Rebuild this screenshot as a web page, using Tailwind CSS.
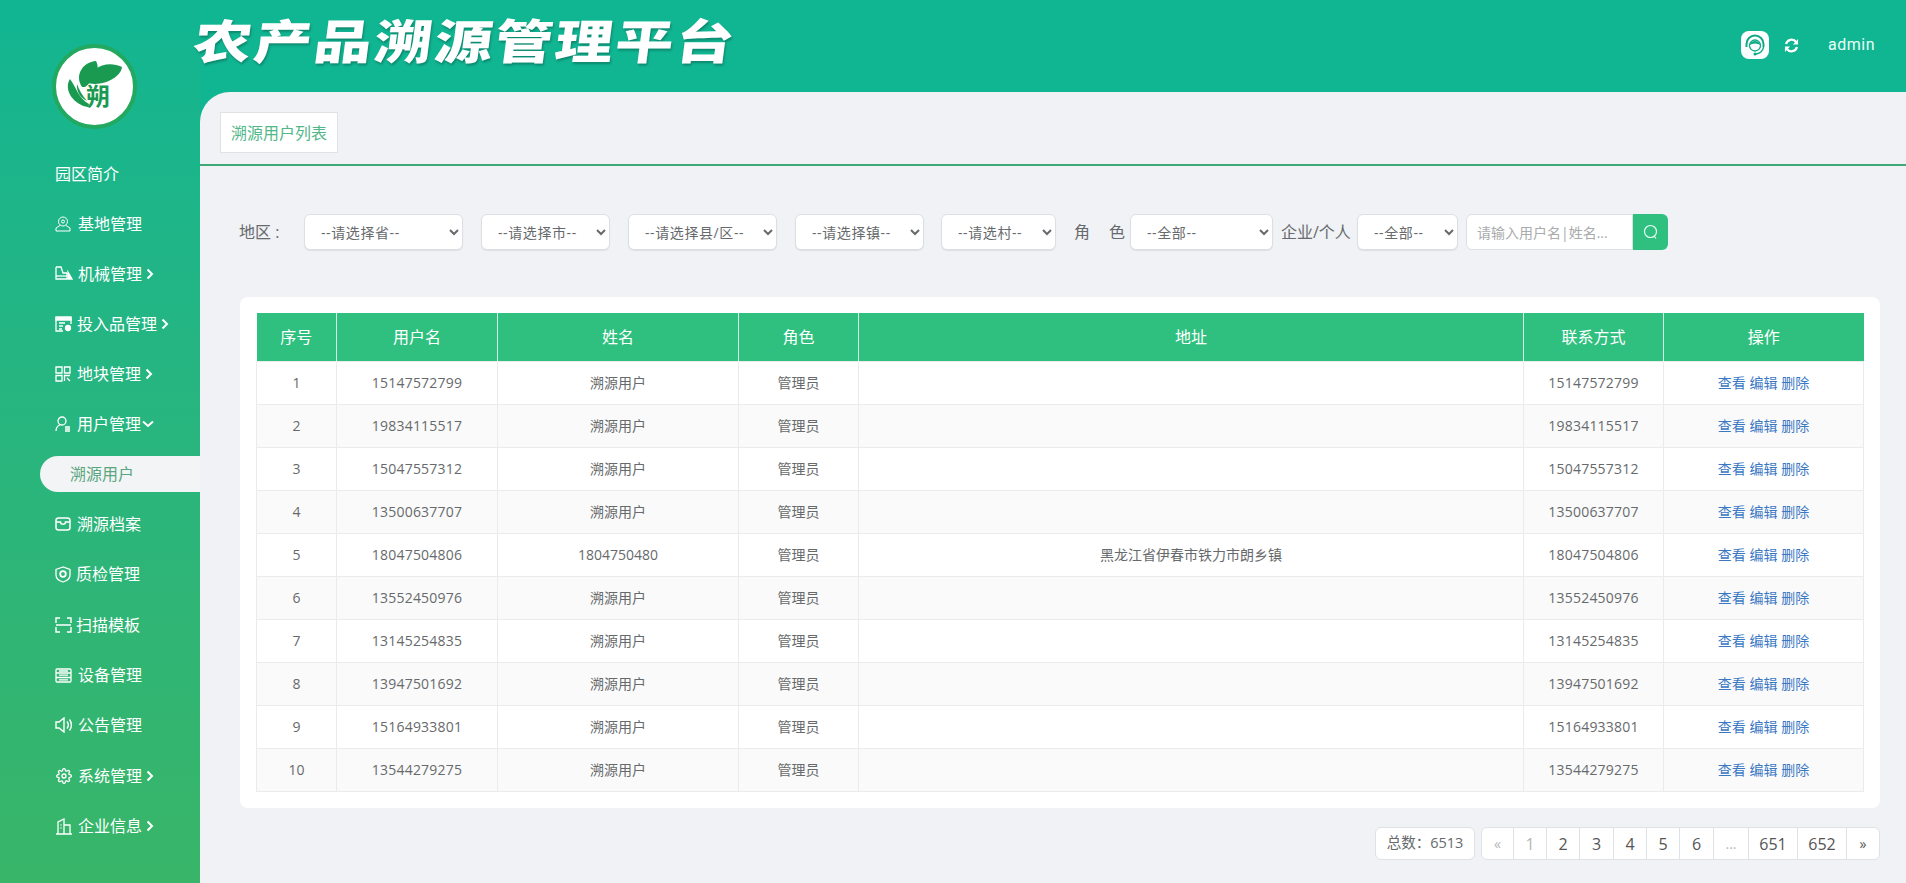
<!DOCTYPE html>
<html lang="zh-CN">
<head>
    <meta charset="UTF-8">
    <meta name="viewport" content="width=device-width, initial-scale=1.0">
    <title>农产品溯源管理平台</title>
    <script src="https://cdn.jsdelivr.net/npm/@tailwindcss/browser@4"></script>
</head>
<body class="h-[883px] overflow-hidden flex bg-[#10b592] text-[#676a6c] font-['Open_Sans','Noto_Sans_CJK_SC',sans-serif]">

    <!-- Sidebar -->
    <aside class="w-[200px] h-full shrink-0 bg-gradient-to-b from-[#10b592] to-[#38b568] text-white text-base">
        <div class="h-[149px] pt-[44px] pl-[52px]">
            <div class="relative w-[85px] h-[85px] rounded-full bg-white border-[4px] border-[#22a85f]">
                <svg class="absolute left-[7px] top-[6px] w-[64px] h-[64px]" viewBox="0 0 64 64" fill="#1a9a50">
                    <path d="M19 33C11 21 20 8 33 7 38 16 31 26 22 33Z"/>
                    <path d="M25 29C27 13 44 6 59 13 58 23 40 33 25 29Z"/>
                    <path d="M7 25C0 36 11 51 25 53L26 50C16 45 13 33 7 25Z"/>
                    <path d="M14 30C13 38 18 44 24 47 19 41 16 36 14 30Z"/>
                </svg>
                <span class="absolute left-[30px] top-[35px] text-[24px] leading-[26px] font-bold text-[#1a9a50]">朔</span>
            </div>
        </div>

        <nav>
            <a class="flex items-center h-[50px] pl-[55px]">园区简介</a>
            <a class="flex items-center h-[50px] pl-[55px]">
                <svg class="w-[16px] h-[16px] mr-[7px]" viewBox="0 0 16 16" fill="none" stroke="currentColor"><circle cx="8" cy="5.500" r="4.500"/><circle cx="8" cy="5.500" r="1.500"/><path d="M5 9.500 1 12v3h14v-3l-4-2.500"/></svg>
                基地管理
            </a>
            <a class="flex items-center h-[50px] pl-[55px]">
                <svg class="w-[18px] h-[16px] mr-[5px]" viewBox="0 0 18 16" fill="none" stroke="currentColor" stroke-width="1.300"><path d="M1 1h5l2 6h4M1 1v12h11V7"/><path d="M1 10h11"/><path d="m13 6 4 7h-4z" fill="currentColor"/></svg>
                机械管理
                <svg class="w-[8px] h-[12px] ml-[4px]" viewBox="0 0 8 12" fill="none" stroke="currentColor" stroke-width="2"><path d="m1.500 1.500 4.500 4.500-4.500 4.500"/></svg>
            </a>
            <a class="flex items-center h-[50px] pl-[55px]">
                <svg class="w-[17px] h-[16px] mr-[5px]" viewBox="0 0 17 16" fill="none" stroke="currentColor" stroke-width="1.300"><path d="M8 15H1V1h15v7"/><path d="M1 2h15v2H1z" fill="currentColor"/><path d="M4 7h6M4 10h4M4 13h3"/><circle cx="13" cy="12" r="2.500" fill="currentColor"/></svg>
                投入品管理
                <svg class="w-[8px] h-[12px] ml-[4px]" viewBox="0 0 8 12" fill="none" stroke="currentColor" stroke-width="2"><path d="m1.500 1.500 4.500 4.500-4.500 4.500"/></svg>
            </a>
            <a class="flex items-center h-[50px] pl-[55px]">
                <svg class="w-[16px] h-[16px] mr-[6px]" viewBox="0 0 16 16" fill="none" stroke="currentColor" stroke-width="1.300"><path d="M1 1h6v6H1zM9.500 1H15v6H9.500zM1 9.500h6V15H1zM9.500 15V9.500H15M12 12l3 3"/></svg>
                地块管理
                <svg class="w-[8px] h-[12px] ml-[4px]" viewBox="0 0 8 12" fill="none" stroke="currentColor" stroke-width="2"><path d="m1.500 1.500 4.500 4.500-4.500 4.500"/></svg>
            </a>
            <a class="flex items-center h-[50px] pl-[55px]">
                <svg class="w-[16px] h-[16px] mr-[6px]" viewBox="0 0 16 16" fill="none" stroke="currentColor" stroke-width="1.300"><circle cx="7" cy="5" r="4"/><path d="M1 15c0-3.500 2-5.500 4.500-6.500"/><path d="M10 11h5M10 13h5M10 15h5"/></svg>
                用户管理
                <svg class="w-[12px] h-[8px] ml-[1px]" viewBox="0 0 12 8" fill="none" stroke="currentColor" stroke-width="2"><path d="m1 1.500 5 4.500 5-4.500"/></svg>
            </a>
            <div class="flex items-center h-[50px] pl-[40px]">
                <a class="flex items-center w-full h-[36px] pl-[30px] rounded-l-[18px] bg-[#f2f4f6] text-[#5aa67f]">溯源用户</a>
            </div>
            <a class="flex items-center h-[50px] pl-[55px]">
                <svg class="w-[16px] h-[16px] mr-[6px]" viewBox="0 0 16 16" fill="none" stroke="currentColor" stroke-width="1.500"><rect x="1" y="2" width="14" height="12" rx="2.500"/><path d="M1 6h4.500c0 3 5 3 5 0H15"/></svg>
                溯源档案
            </a>
            <a class="flex items-center h-[50px] pl-[55px]">
                <svg class="w-[16px] h-[17px] mr-[5px]" viewBox="0 0 16 17" fill="none" stroke="currentColor" stroke-width="1.300"><path d="M8 1 1 3.500V9c0 3.500 3.500 6 7 7 3.500-1 7-3.500 7-7V3.500z"/><circle cx="8" cy="8" r="2.800" stroke-width="1.800"/></svg>
                质检管理
            </a>
            <a class="flex items-center h-[51px] pl-[55px]">
                <svg class="w-[17px] h-[16px] mr-[4px]" viewBox="0 0 17 16" fill="none" stroke="currentColor" stroke-width="1.400"><path d="M5 1H1v5M12 1h4v5M5 15H1v-5M12 15h4v-5M1 8h15"/></svg>
                扫描模板
            </a>
            <a class="flex items-center h-[50px] pl-[55px]">
                <svg class="w-[17px] h-[15px] mr-[6px]" viewBox="0 0 17 15" fill="none" stroke="currentColor" stroke-width="1.300"><rect x="1" y="1" width="15" height="13" rx="1"/><path d="M1 5h15M1 9.500h15M4 3h9M4 7.200h9M4 11.800h9"/></svg>
                设备管理
            </a>
            <a class="flex items-center h-[50px] pl-[55px]">
                <svg class="w-[18px] h-[16px] mr-[5px]" viewBox="0 0 18 16" fill="none" stroke="currentColor" stroke-width="1.400"><path d="M1 5h3l5-4v14l-5-4H1z"/><path d="M12 4.500c1.500 2 1.500 5 0 7M14.500 2.500c2.500 3 2.500 8 0 11"/></svg>
                公告管理
            </a>
            <a class="flex items-center h-[51px] pl-[56px]">
                <svg class="w-[16px] h-[16px] mr-[6px]" viewBox="0 0 24 24" fill="none" stroke="currentColor" stroke-width="2"><circle cx="12" cy="12" r="3"/><path d="M19.400 15a1.650 1.650 0 0 0 .33 1.820l.06.06a2 2 0 0 1 0 2.830 2 2 0 0 1-2.830 0l-.06-.06a1.650 1.650 0 0 0-1.820-.33 1.650 1.650 0 0 0-1 1.510V21a2 2 0 0 1-2 2 2 2 0 0 1-2-2v-.09A1.650 1.650 0 0 0 9 19.400a1.650 1.650 0 0 0-1.820.33l-.06.06a2 2 0 0 1-2.830 0 2 2 0 0 1 0-2.830l.06-.06a1.650 1.650 0 0 0 .33-1.820 1.650 1.650 0 0 0-1.510-1H3a2 2 0 0 1-2-2 2 2 0 0 1 2-2h.09A1.650 1.650 0 0 0 4.600 9a1.650 1.650 0 0 0-.33-1.820l-.06-.06a2 2 0 0 1 0-2.830 2 2 0 0 1 2.830 0l.06.06a1.650 1.650 0 0 0 1.820.33H9a1.650 1.650 0 0 0 1-1.510V3a2 2 0 0 1 2-2 2 2 0 0 1 2 2v.09a1.650 1.650 0 0 0 1 1.510 1.650 1.650 0 0 0 1.820-.33l.06-.06a2 2 0 0 1 2.830 0 2 2 0 0 1 0 2.830l-.06.06a1.650 1.650 0 0 0-.33 1.820V9a1.650 1.650 0 0 0 1.510 1H21a2 2 0 0 1 2 2 2 2 0 0 1-2 2h-.09a1.650 1.650 0 0 0-1.510 1z"/></svg>
                系统管理
                <svg class="w-[8px] h-[12px] ml-[4px]" viewBox="0 0 8 12" fill="none" stroke="currentColor" stroke-width="2"><path d="m1.500 1.500 4.500 4.500-4.500 4.500"/></svg>
            </a>
            <a class="flex items-center h-[50px] pl-[56px]">
                <svg class="w-[16px] h-[17px] mr-[6px]" viewBox="0 0 16 17" fill="none" stroke="currentColor" stroke-width="1.300"><path d="M0 16h16M2 16V4l6-3v15M8 7h6v9M4.500 7h1M4.500 10h1"/></svg>
                企业信息
                <svg class="w-[8px] h-[12px] ml-[4px]" viewBox="0 0 8 12" fill="none" stroke="currentColor" stroke-width="2"><path d="m1.500 1.500 4.500 4.500-4.500 4.500"/></svg>
            </a>
        </nav>
    </aside>

    <div class="flex-1 min-w-0 flex flex-col">
        <!-- Header -->
        <header class="h-[92px] shrink-0 flex items-start justify-between text-white">
            <h1 class="ml-[-6px] mt-[7px] text-[47px] leading-[68px] font-black whitespace-nowrap tracking-[2px] origin-left scale-x-[1.23] -skew-x-6 [text-shadow:1px_2px_2px_rgba(0,0,0,0.25)]">农产品溯源管理平台</h1>
            <div class="flex items-center h-[90px] pr-[31px]">
                <span class="flex items-center justify-center w-[28px] h-[28px] rounded-[8px] bg-white">
                    <svg class="w-[24px] h-[24px] text-[#10a986]" viewBox="0 0 24 24" fill="none" stroke="currentColor">
                        <path d="M3.500 14V11a8.500 8.500 0 0 1 17 0v3" stroke-width="2"/>
                        <circle cx="12" cy="12.500" r="5.500" stroke-width="1.300"/>
                        <path d="M6.500 12C8 6.500 16 6.500 17.500 12 14 10 10 10 6.500 12Z" fill="currentColor" stroke="none"/>
                        <path d="M20.500 14c-.5 4-4 6.500-7.500 7" stroke-width="1.500"/>
                        <circle cx="12" cy="21" r="1.500" fill="currentColor" stroke="none"/>
                    </svg>
                </span>
                <svg class="w-[15px] h-[15px] ml-[15px]" viewBox="0 0 16 16" fill="none" stroke="currentColor" stroke-width="2.400"><path d="M2.200 6.500A6 6 0 0 1 13 4.500"/><path d="M13.800 9.500A6 6 0 0 1 3 11.500"/><path d="M15 1v6H9.500z" fill="currentColor" stroke="none"/><path d="M1 15V9h5.500z" fill="currentColor" stroke="none"/></svg>
                <span class="ml-[29px] text-base tracking-[0.5px] font-['Roboto',sans-serif] text-[#e6fff6]">admin</span>
            </div>
        </header>

        <!-- Main -->
        <main class="flex-1 min-h-0 bg-[#f0f2f5] rounded-tl-[30px] overflow-hidden">
            <div class="h-[74px] border-b-2 border-[#3fa877] pt-[20px] pl-[20px]">
                <div class="flex items-center justify-center w-[118px] h-[41px] bg-white border border-[#dfe3e6] text-base text-[#52b788]">溯源用户列表</div>
            </div>

            <form class="flex items-center h-[36px] mt-[48px] text-sm [&_select]:h-[36px] [&_select]:pl-[12px] [&_select]:bg-white [&_select]:border [&_select]:border-[#dcdfe3] [&_select]:rounded-[6px] [&_select]:tracking-[0.6px] [&_select]:shadow-[0_1px_1px_rgba(0,0,0,0.08)]">
                <label class="w-[65px] ml-[39px] text-base whitespace-pre">地区 :</label>
                <select class="w-[159px]"><option>--请选择省--</option></select>
                <select class="w-[129px] ml-[18px]"><option>--请选择市--</option></select>
                <select class="w-[149px] ml-[18px]"><option>--请选择县/区--</option></select>
                <select class="w-[129px] ml-[18px]"><option>--请选择镇--</option></select>
                <select class="w-[115px] ml-[17px]"><option>--请选村--</option></select>
                <label class="w-[74px] pl-[18px] text-base tracking-[19px] whitespace-nowrap">角色</label>
                <select class="w-[143px]"><option>--全部--</option></select>
                <label class="ml-[8px] w-[76px] text-base whitespace-nowrap">企业/个人</label>
                <select class="w-[101px]"><option>--全部--</option></select>
                <input class="w-[167px] h-[36px] ml-[8px] pl-[10px] bg-white border border-[#dcdfe3] rounded-l-[6px] placeholder:text-[#a9abad]" placeholder="请输入用户名|姓名...">
                <button type="button" class="flex items-center justify-center w-[35px] h-[36px] bg-[#2fc07f] rounded-r-[6px]">
                    <svg class="w-[16px] h-[16px]" viewBox="0 0 16 16" fill="none" stroke="#e9fff5" stroke-width="1.200"><circle cx="7.500" cy="7.500" r="6"/><path d="m11 12 2 2.500"/></svg>
                </button>
            </form>

            <!-- User table -->
            <section class="ml-[40px] mt-[47px] w-[1640px] h-[511px] p-[16px] bg-white rounded-[8px]">
                <table class="w-[1607px] table-fixed border-collapse text-sm text-center [&_td]:h-[43px] [&_td]:border [&_td]:border-[#e9ebec] [&_td]:p-0 [&_td:nth-child(2)]:tracking-[0.2px] [&_td:nth-child(6)]:tracking-[0.2px] [&_th]:h-[48px] [&_th]:font-normal [&_th]:text-base [&_th]:text-white [&_th]:border-x [&_th]:border-white/80 [&_th]:first:border-l-0 [&_th]:last:border-r-0 [&_tbody_tr:nth-child(even)]:bg-[#fafafa] [&_a]:text-[#3a78c4]">
                    <colgroup>
                        <col class="w-[80px]"><col class="w-[161px]"><col class="w-[241px]"><col class="w-[120px]"><col class="w-[665px]"><col class="w-[140px]"><col class="w-[200px]">
                    </colgroup>
                    <thead class="bg-[#2fc07f]">
                        <tr><th>序号</th><th>用户名</th><th>姓名</th><th>角色</th><th>地址</th><th>联系方式</th><th>操作</th></tr>
                    </thead>
                    <tbody>
                        <tr><td>1</td><td>15147572799</td><td>溯源用户</td><td>管理员</td><td></td><td>15147572799</td><td><a>查看</a> <a>编辑</a> <a>删除</a></td></tr>
                        <tr><td>2</td><td>19834115517</td><td>溯源用户</td><td>管理员</td><td></td><td>19834115517</td><td><a>查看</a> <a>编辑</a> <a>删除</a></td></tr>
                        <tr><td>3</td><td>15047557312</td><td>溯源用户</td><td>管理员</td><td></td><td>15047557312</td><td><a>查看</a> <a>编辑</a> <a>删除</a></td></tr>
                        <tr><td>4</td><td>13500637707</td><td>溯源用户</td><td>管理员</td><td></td><td>13500637707</td><td><a>查看</a> <a>编辑</a> <a>删除</a></td></tr>
                        <tr><td>5</td><td>18047504806</td><td>1804750480</td><td>管理员</td><td>黑龙江省伊春市铁力市朗乡镇</td><td>18047504806</td><td><a>查看</a> <a>编辑</a> <a>删除</a></td></tr>
                        <tr><td>6</td><td>13552450976</td><td>溯源用户</td><td>管理员</td><td></td><td>13552450976</td><td><a>查看</a> <a>编辑</a> <a>删除</a></td></tr>
                        <tr><td>7</td><td>13145254835</td><td>溯源用户</td><td>管理员</td><td></td><td>13145254835</td><td><a>查看</a> <a>编辑</a> <a>删除</a></td></tr>
                        <tr><td>8</td><td>13947501692</td><td>溯源用户</td><td>管理员</td><td></td><td>13947501692</td><td><a>查看</a> <a>编辑</a> <a>删除</a></td></tr>
                        <tr><td>9</td><td>15164933801</td><td>溯源用户</td><td>管理员</td><td></td><td>15164933801</td><td><a>查看</a> <a>编辑</a> <a>删除</a></td></tr>
                        <tr><td>10</td><td>13544279275</td><td>溯源用户</td><td>管理员</td><td></td><td>13544279275</td><td><a>查看</a> <a>编辑</a> <a>删除</a></td></tr>
                    </tbody>
                </table>
            </section>

            <!-- Pagination -->
            <div class="flex justify-end h-[33px] mt-[19px] mr-[26px] text-sm">
                <span class="flex items-center justify-center w-[100px] border border-[#dfe2e5] rounded-[6px] bg-white text-[14.5px]">总数：6513</span>
                <ul class="flex ml-[6px] bg-white border border-[#dfe2e5] rounded-[6px] text-base text-[#555] divide-x divide-[#dfe2e5] [&_li]:flex [&_li]:items-center [&_li]:justify-center">
                    <li class="w-[32px] text-[#b5b7b9] text-sm">«</li>
                    <li class="w-[33px] text-[#b5b7b9]">1</li>
                    <li class="w-[33px]">2</li>
                    <li class="w-[34px]">3</li>
                    <li class="w-[33px]">4</li>
                    <li class="w-[33px]">5</li>
                    <li class="w-[34px]">6</li>
                    <li class="w-[35px] text-[#b5b7b9] text-sm">...</li>
                    <li class="w-[49px]">651</li>
                    <li class="w-[49px]">652</li>
                    <li class="w-[32px] text-sm">»</li>
                </ul>
            </div>
        </main>
    </div>
</body>
</html>
